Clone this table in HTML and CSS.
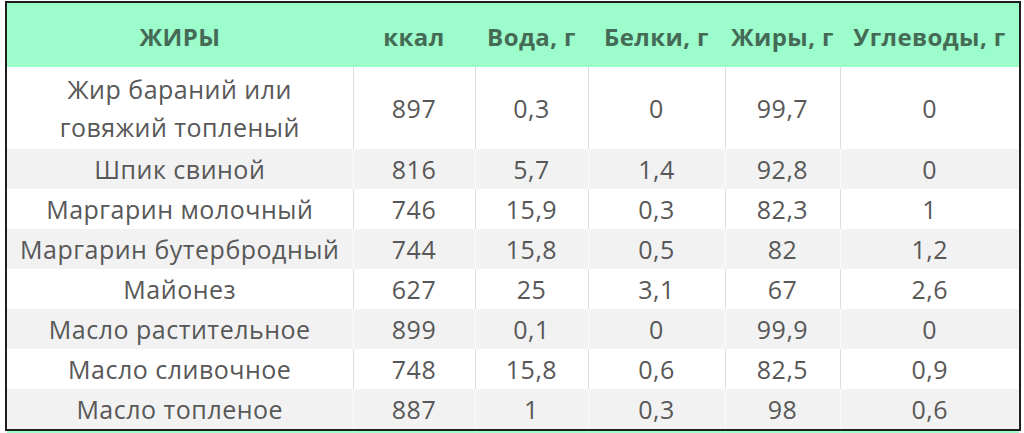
FILE: index.html
```html
<!DOCTYPE html>
<html lang="ru">
<head>
<meta charset="utf-8">
<title>Жиры</title>
<link rel="stylesheet" href="styles.css">
</head>
<body>
<div class="sheet">
  <table class="fat-table">
    <colgroup>
      <col class="c-name">
      <col class="c-kcal">
      <col class="c-water">
      <col class="c-prot">
      <col class="c-fat">
      <col class="c-carb">
    </colgroup>
    <thead>
      <tr class="head">
        <th>ЖИРЫ</th>
        <th>ккал</th>
        <th>Вода, г</th>
        <th>Белки, г</th>
        <th>Жиры, г</th>
        <th>Углеводы, г</th>
      </tr>
    </thead>
    <tbody>
      <tr class="tall">
        <td>Жир бараний или<br>говяжий топленый</td>
        <td>897</td><td>0,3</td><td>0</td><td>99,7</td><td>0</td>
      </tr>
      <tr class="alt">
        <td>Шпик свиной</td>
        <td>816</td><td>5,7</td><td>1,4</td><td>92,8</td><td>0</td>
      </tr>
      <tr>
        <td>Маргарин молочный</td>
        <td>746</td><td>15,9</td><td>0,3</td><td>82,3</td><td>1</td>
      </tr>
      <tr class="alt">
        <td>Маргарин бутербродный</td>
        <td>744</td><td>15,8</td><td>0,5</td><td>82</td><td>1,2</td>
      </tr>
      <tr>
        <td>Майонез</td>
        <td>627</td><td>25</td><td>3,1</td><td>67</td><td>2,6</td>
      </tr>
      <tr class="alt">
        <td>Масло растительное</td>
        <td>899</td><td>0,1</td><td>0</td><td>99,9</td><td>0</td>
      </tr>
      <tr>
        <td>Масло сливочное</td>
        <td>748</td><td>15,8</td><td>0,6</td><td>82,5</td><td>0,9</td>
      </tr>
      <tr class="alt">
        <td>Масло топленое</td>
        <td>887</td><td>1</td><td>0,3</td><td>98</td><td>0,6</td>
      </tr>
    </tbody>
  </table>
  <div class="next-head"></div>
</div>
</body>
</html>
```

FILE: styles.css
```css
html, body {
  margin: 0;
  padding: 0;
  background: #ffffff;
  overflow: hidden;
}

.sheet {
  padding: 1px 4px 0 5px;
  width: 1015px;
}

.fat-table {
  width: 1016px;
  border-collapse: collapse;
  table-layout: fixed;
  border: 2px solid #1e1e1e;
  font-family: "Open Sans", "Liberation Sans", sans-serif;
}

.c-name { width: 347px; }
.c-kcal { width: 122px; }
.c-water { width: 113px; }
.c-prot { width: 137px; }
.c-fat { width: 115px; }
.c-carb { width: auto; }

.head {
  background: #9cfccb;
  height: 65px;
}

.head th {
  font-size: 24px;
  font-weight: 700;
  letter-spacing: 0.4px;
  color: #456a56;
  text-align: center;
  padding: 2px 0 0;
  vertical-align: middle;
  white-space: nowrap;
}

tbody td {
  font-size: 25px;
  letter-spacing: 0.5px;
  color: #585858;
  text-align: center;
  padding: 0;
  line-height: 38px;
  height: 40px;
  border-left: 1px solid #dedede;
  vertical-align: middle;
  white-space: nowrap;
}

tbody td:first-child {
  border-left: none;
}

tbody tr.tall td {
  height: 82px;
}

tbody tr.alt {
  background: #f2f2f2;
}

tbody tr.alt td {
  border-left-color: #fbfbfb;
}

tbody tr.alt td:first-child {
  border-left: none;
}

.next-head {
  height: 6px;
  margin-left: 2px;
  width: 1012px;
  background: #9cfccb;
}
```
